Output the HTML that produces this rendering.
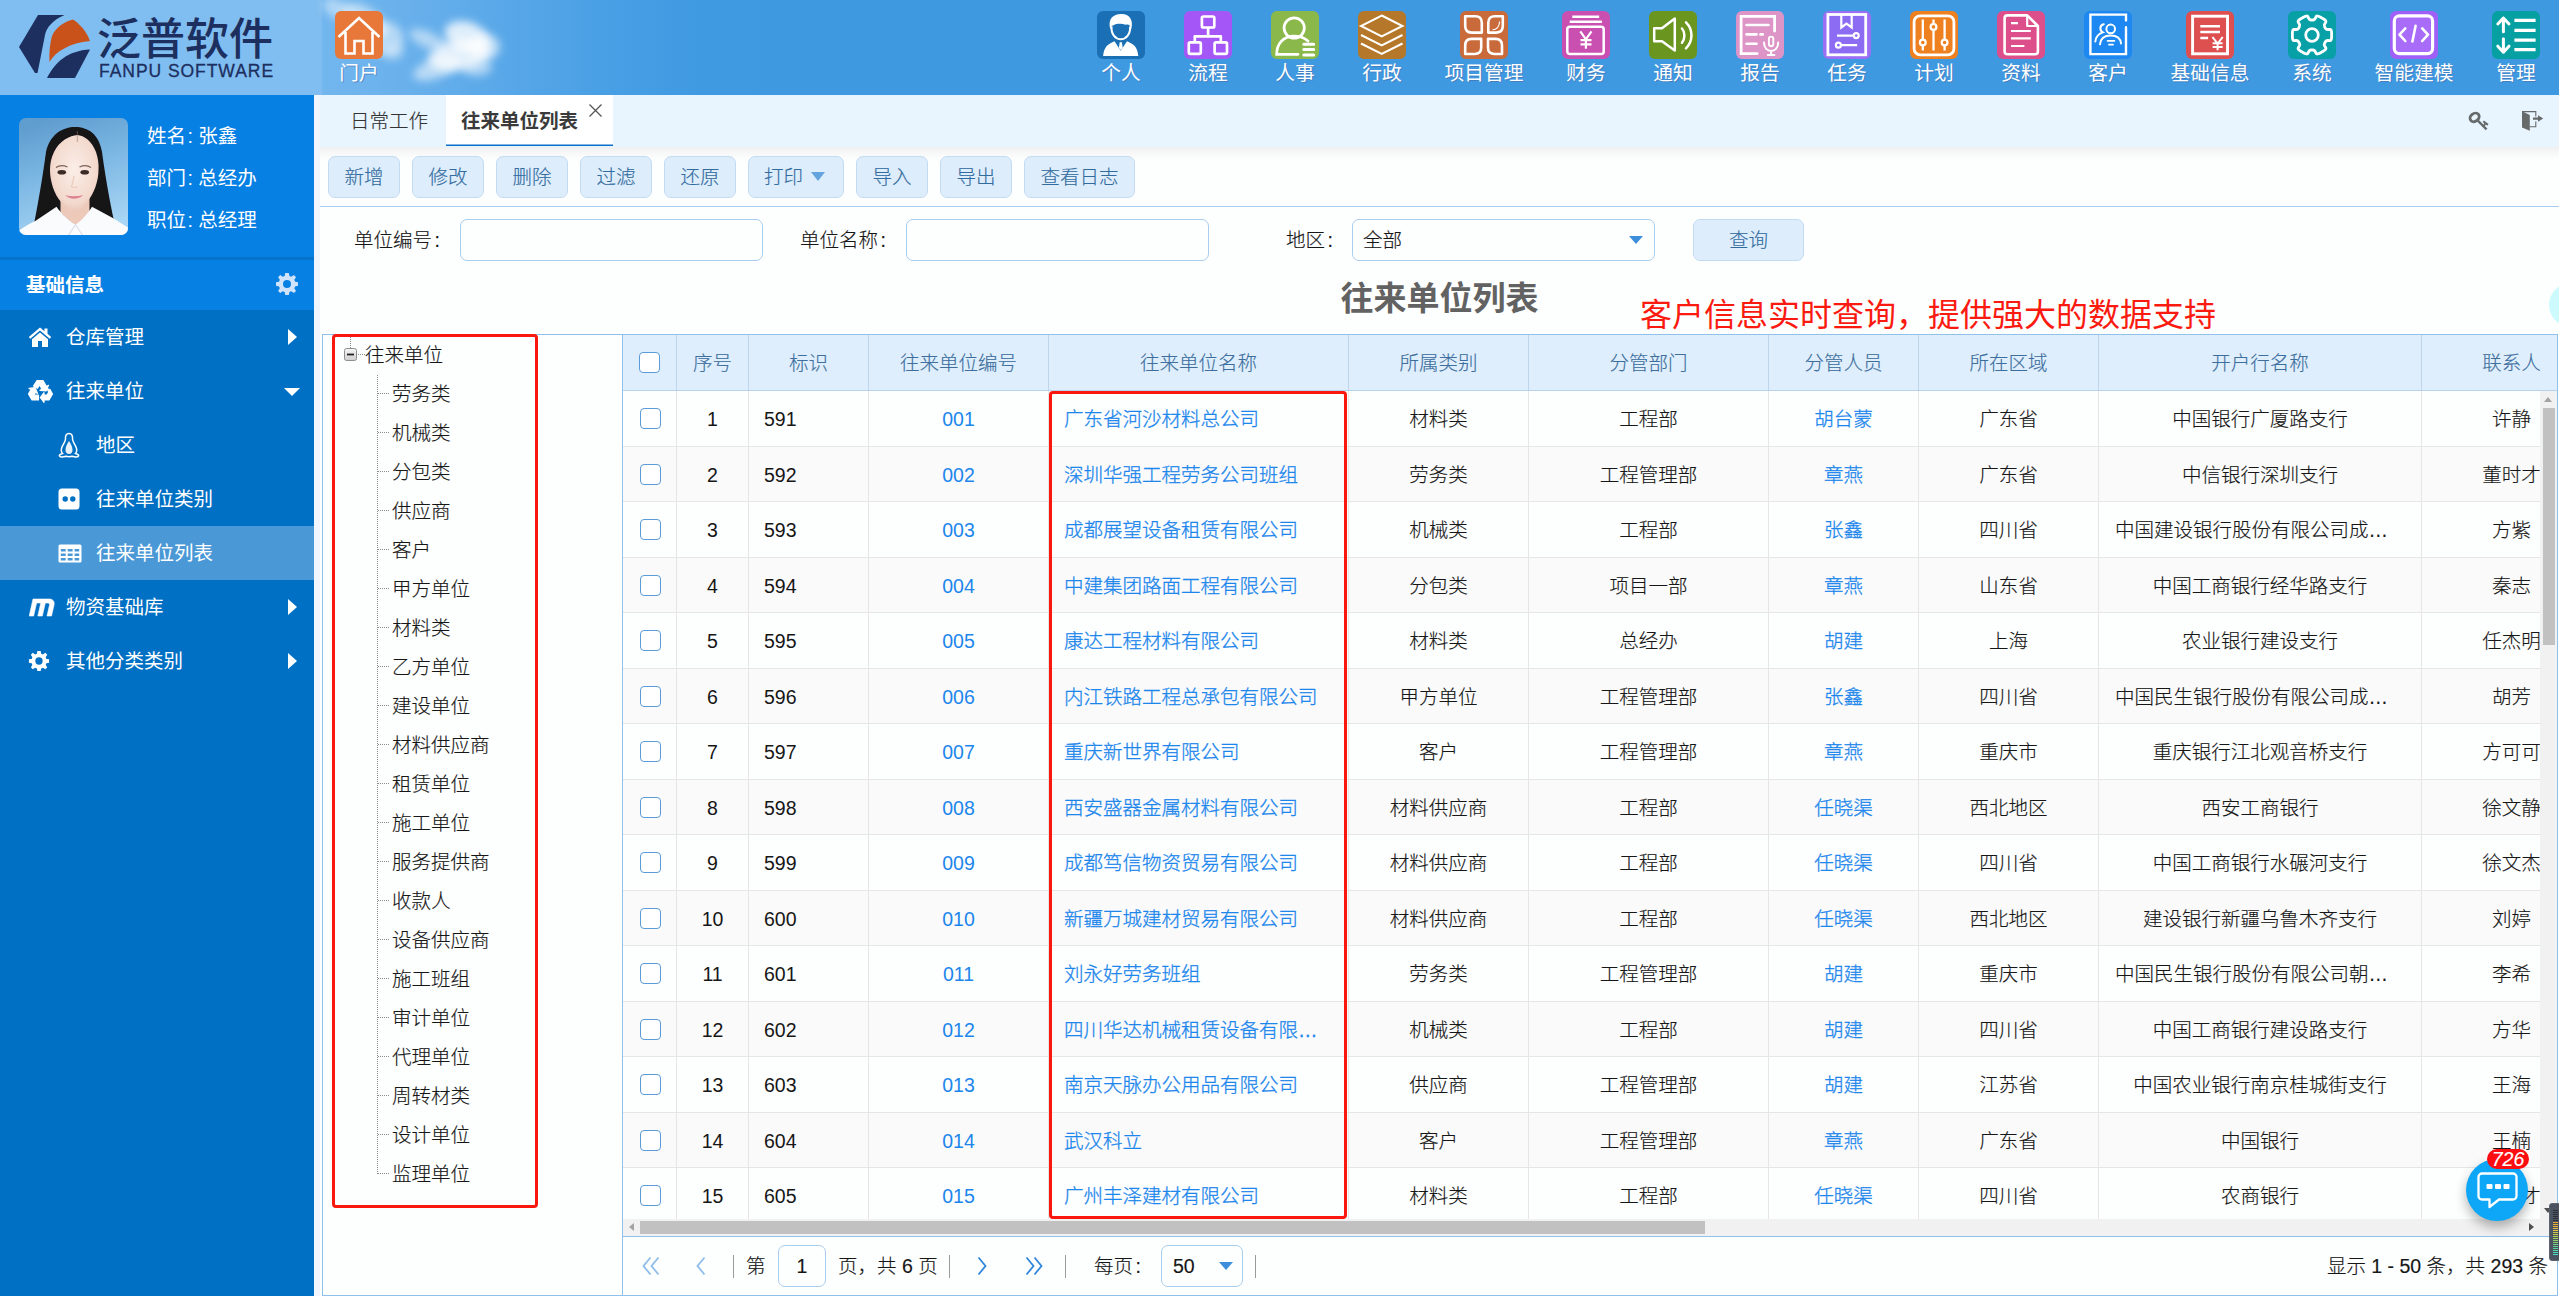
<!DOCTYPE html>
<html lang="zh-CN">
<head>
<meta charset="utf-8">
<title>往来单位列表 - 泛普软件</title>
<style>
*{box-sizing:border-box;margin:0;padding:0}
html,body{width:2559px;height:1296px;overflow:hidden;background:#fdfefe}
body{font-family:"Liberation Sans","Noto Sans CJK SC",sans-serif;font-size:19.5px;font-weight:300;-webkit-text-stroke:0.16px currentColor;color:#1a1a1a;position:relative}
#hdr,#side{font-weight:400;-webkit-text-stroke:0}
#title,#tabs .act,#sect b{-webkit-text-stroke:0}
.abs{position:absolute}
/* header */
#hdr{position:absolute;left:0;top:0;width:2559px;height:95px;overflow:hidden;
 background:linear-gradient(90deg,#80bdf0 0,#80bdf0 321px,#72b6ee 323px,#6ab1ec 400px,#58a7e8 510px,#489fe4 610px,#409ae2 700px,#3f99e1 790px,#3f99e1 100%)}
.cloud{position:absolute;border-radius:50%;filter:blur(4px);background:#fff}
#logo-cn{position:absolute;left:97px;top:7.5px;font-size:44px;line-height:64px;font-weight:500;color:#1c2f5f;letter-spacing:0px;white-space:nowrap}
#logo-en{position:absolute;left:99px;top:59px;font-size:17.5px;line-height:24px;color:#1c2f5f;letter-spacing:0.95px;white-space:nowrap;-webkit-text-stroke:0.3px #1c2f5f}
.nav{position:absolute;top:11px;width:130px;margin-left:-65px;text-align:center;color:#fff;font-size:19.75px;line-height:24px;white-space:nowrap}
.nav svg{display:block;margin:0 auto;width:48px;height:48px;border-radius:6px}
.nav span{display:block;margin-top:1.5px;text-shadow:1px 1px 0 rgba(70,110,170,.6)}
/* sidebar */
#side{position:absolute;left:0;top:95px;width:314px;height:1201px;background:#0070c4;color:#fff}
#user{position:absolute;left:0;top:0;width:314px;height:162px;background:#0780e4}
#user .ln{position:absolute;left:147px;font-size:19.5px;line-height:28px;white-space:nowrap}
#sect{position:absolute;left:0;top:162px;width:314px;height:53px;background:#0780e4;border-top:3px solid #0572cb}
#sect b{position:absolute;left:26px;top:11px;font-size:19.5px;line-height:28px;font-weight:700}
.mi{position:absolute;left:0;width:314px;height:54px;line-height:54px;font-size:19.5px;white-space:nowrap}
.mi .t{position:absolute;left:66px;top:0}
.mi.sub .t{left:96px}
.mi svg{position:absolute}
.mi.sel{background:#4a98d6}
.arr-r{position:absolute;left:288px;top:19px;width:0;height:0;border-left:9px solid #fff;border-top:8px solid transparent;border-bottom:8px solid transparent}
.arr-d{position:absolute;left:284px;top:24px;width:0;height:0;border-top:8px solid #fff;border-left:8px solid transparent;border-right:8px solid transparent}
/* main */
#strip{position:absolute;left:314px;top:95px;width:6px;height:1201px;background:#f1f5fd}
#tabs{position:absolute;left:320px;top:95px;width:2239px;height:52px;background:#e8f4fe}
#tabs .tab{position:absolute;top:0;height:51px;line-height:52px;font-size:19.5px;color:#333;white-space:nowrap}
#tabs .act{left:126px;width:167px;background:linear-gradient(180deg,#fff 0,#fff 49px,#0a6fc8 50px,#0a6fc8 51px);font-weight:700;color:#3a3a3a;padding-left:15px}
#shadow{position:absolute;left:320px;top:147px;width:2239px;height:13px;background:linear-gradient(180deg,#efefef 0,#f7f7f7 40%,#fdfefe 100%)}
.btn{position:absolute;top:156px;height:42px;line-height:40px;border:1px solid #c4dcf3;border-radius:7px;background:#deedfb;color:#326c9f;font-size:19.5px;text-align:center;white-space:nowrap}
.lbl{position:absolute;top:226px;line-height:28px;font-size:19.5px;color:#161616;white-space:nowrap}
.cl{margin-left:2.5px}
.inp{position:absolute;top:219px;height:42px;border:1px solid #a9cdee;border-radius:7px;background:#fdfefe}
#title{position:absolute;left:320px;top:275px;width:2239px;text-align:center;font-size:33px;line-height:48px;font-weight:700;color:#626262}
#note{position:absolute;left:1640px;top:291.5px;font-size:32px;line-height:46px;font-weight:400;-webkit-text-stroke:0;color:#fb1a10;white-space:nowrap}
/* panel */
#panel{position:absolute;left:322px;top:334px;width:2236px;height:962px;border:1px solid #8fc1ea;background:#fdfefe}
#tree{position:absolute;left:323px;top:335px;width:299px;height:960px}
.tn{position:absolute;left:392px;line-height:28px;font-size:19.5px;color:#161616;white-space:nowrap}
.redbox{position:absolute;border:3px solid #fa170e;border-radius:4px}
#grid{position:absolute;left:622px;top:335px;width:1935px;height:960px;border-left:1px solid #8fc1ea;overflow:hidden}
#gh{position:absolute;left:0;top:0;width:1934px;height:56px;background:#dfeefc;border-bottom:1px solid #b7d3ec}
.hc{position:absolute;top:0;height:55px;line-height:57px;text-align:center;color:#3d6e9e;font-size:19.5px;border-right:1px solid #bdd6ed;white-space:nowrap;overflow:hidden}
#gb{position:absolute;left:0;top:56px;width:1917px;height:828px;overflow:hidden}
.row{position:absolute;left:0;width:1980px;height:55.5px;border-bottom:1px solid #e6e6e6;background:#fdfefe}
.row.alt{background:#fafafa}
.c.t{text-align:left;padding-left:16px}
.c{position:absolute;top:0;height:55.5px;line-height:56.5px;text-align:center;border-right:1px solid #e6e6e6;white-space:nowrap;overflow:hidden;;font-size:19.5px;color:#161616}
.c.l{text-align:left;padding-left:15px}
.c.n{-webkit-text-stroke:0}
.c.a{color:#1c86ec;-webkit-text-stroke:0.3px #1c86ec}
.c.a.n{-webkit-text-stroke:0}
.cb{position:absolute;width:21px;height:21px;border:1.5px solid #5a9bd8;border-radius:4px;background:#fff}
#pager{position:absolute;left:0;top:901px;width:1934px;height:59px;border-top:1px solid #8fc1ea;;font-size:19.5px;color:#161616}
#pager .t{position:absolute;top:15px;line-height:28px;white-space:nowrap}
.sep{position:absolute;top:18px;width:1px;height:23px;background:#9a9a9a}
</style>
</head>
<body>
<div id="hdr">
 <div class="cloud" style="left:322px;top:0px;width:30px;height:18px;opacity:.45;transform:rotate(30deg)"></div>
 <div class="cloud" style="left:340px;top:8px;width:50px;height:26px;opacity:.55;transform:rotate(35deg)"></div>
 <div class="cloud" style="left:368px;top:22px;width:36px;height:34px;opacity:.5;transform:rotate(40deg)"></div>
 <div class="cloud" style="left:384px;top:44px;width:20px;height:16px;opacity:.3"></div>
 <div class="cloud" style="left:408px;top:32px;width:40px;height:16px;opacity:.5;transform:rotate(25deg)"></div>
 <div class="cloud" style="left:444px;top:22px;width:46px;height:30px;opacity:.8;transform:rotate(20deg)"></div>
 <div class="cloud" style="left:428px;top:40px;width:62px;height:30px;opacity:.8;transform:rotate(-10deg)"></div>
 <div class="cloud" style="left:470px;top:34px;width:30px;height:26px;opacity:.6"></div>
 <div class="cloud" style="left:412px;top:58px;width:50px;height:20px;opacity:.55;transform:rotate(-20deg)"></div>
 <div class="cloud" style="left:462px;top:58px;width:30px;height:18px;opacity:.5"></div>
 <svg class="abs" style="left:0;top:0" width="100" height="95" viewBox="0 0 100 95">
  <path d="M38,15 L64.5,15 C53,20 46.5,27 45,35 L37.5,73 L35,73 L19,47 Z" fill="#1c2f5f"/>
  <path d="M73,19.5 C80,24 87,32 90,41 C70,43 56,51 49.5,62 C49,52 50,43 52,36 C56,27 64,22 73,19.5 Z" fill="#c9521b"/>
  <path d="M90,49.5 L75,78 L47,78 C55,62 68,50.5 90,49.5 Z" fill="#1c2f5f"/>
 </svg>
 <div id="logo-cn">泛普软件</div>
 <div id="logo-en">FANPU SOFTWARE</div>

 <div class="nav" style="left:359px">
  <svg viewBox="0 0 48 48" style="background:#e8783a"><path d="M3.5,26 L24,7 L44.5,26 M10.5,21 V42.5 H19.5 V30 H28.5 V42.5 H37.5 V21" fill="none" stroke="#fff" stroke-width="2.6" stroke-linejoin="miter"/></svg><span>门户</span></div>

 <div class="nav" style="left:1121px">
  <svg viewBox="0 0 48 48" style="background:#1b6fb5"><path d="M13.3,18.5 C10.5,8 16,3 24,3 C31.5,2.5 37,8 34.2,18.5 C33.8,14 31.5,13 28.5,13.8 C25,12.3 19.5,12.6 16.5,14.2 C14.5,14.6 13.8,16 13.3,18.5 Z" fill="#fff"/><path d="M14.6,15.5 C13.8,23.5 18.8,28.3 23.8,28.3 C28.7,28.3 33.8,23.5 33,15.5" fill="none" stroke="#fff" stroke-width="2"/><path d="M6.1,45 C7,36.5 10,33.3 17.5,30.2 L23.7,39.8 L30,30.2 C37.5,33.3 40.5,36.5 41.3,45 Z" fill="#fff"/><path d="M22.7,31.3 H24.9 L25.7,36.8 L23.8,39.2 L21.9,36.8 Z" fill="#fff"/></svg><span>个人</span></div>

 <div class="nav" style="left:1208px">
  <svg viewBox="0 0 48 48" style="background:#a556f6"><g fill="none" stroke="#fff" stroke-width="2.7" stroke-linejoin="round"><rect x="17.9" y="5.5" width="12.4" height="11" rx="1.5"/><rect x="4.8" y="31.3" width="12" height="11.5" rx="1.5"/><rect x="30.6" y="31.3" width="12.4" height="11.5" rx="1.5"/><path d="M24.1,16.5 V25.3 M10.8,31.3 V25.3 H36.8 V31.3"/></g></svg><span>流程</span></div>

 <div class="nav" style="left:1295px">
  <svg viewBox="0 0 48 48" style="background:#8bb84a"><g fill="none" stroke="#fff" stroke-width="2.8" stroke-linecap="round"><circle cx="23.2" cy="17" r="10.1"/><path d="M37,30 C33,26.5 28.5,25.2 23,25.2 C12,25.2 5.7,33 5.7,43.3 H27"/><path d="M32.8,33.3 H42.7 M32.8,38.6 H42.7 M32.8,43.9 H42.7" stroke-width="3"/></g></svg><span>人事</span></div>

 <div class="nav" style="left:1382px">
  <svg viewBox="0 0 48 48" style="background:#b5782a"><g fill="none" stroke="#fff" stroke-width="2" stroke-linejoin="miter"><path d="M23.7,4.5 L44.5,15 L23.7,25.5 L3,15 Z"/><path d="M3,24 L23.7,34.5 L44.5,24"/><path d="M3,32.5 L23.7,43 L44.5,32.5"/></g></svg><span>行政</span></div>

 <div class="nav" style="left:1484px">
  <svg viewBox="0 0 48 48" style="background:#c96a3a"><g fill="none" stroke="#fff" stroke-width="2.6" stroke-linejoin="round"><path d="M5.2,5.2 L15.3,5.2 Q21.8,5.2 21.8,11.7 L21.8,21.6 L11.7,21.6 Q5.2,21.6 5.2,15.1 Z"/><path d="M34.8,5.2 L42.8,5.2 L42.8,15.1 Q42.8,21.6 36.3,21.6 L28.3,21.6 L28.3,11.7 Q28.3,5.2 34.8,5.2 Z"/><path d="M11.7,27.9 L21.2,27.9 L21.2,36.5 Q21.2,43 14.7,43 L5.2,43 L5.2,34.4 Q5.2,27.9 11.7,27.9 Z"/><path d="M28,27.9 L35.5,27.9 Q42,27.9 42,34.4 L42,43 L34.5,43 Q28,43 28,36.5 Z"/></g><path d="M32.5,18.8 C37,18.6 39.3,16 39.6,10.5" fill="none" stroke="#fff" stroke-width="1.1"/></svg><span>项目管理</span></div>

 <div class="nav" style="left:1586px">
  <svg viewBox="0 0 48 48" style="background:#c94fb0"><g fill="none" stroke="#fff" stroke-width="2.5"><path d="M10.3,5.7 H37.2 M7.7,10.8 H39.9"/><rect x="5.3" y="15.8" width="36.4" height="27.2" rx="2.5"/><path d="M18.3,20.3 L23.9,28.3 L29.5,20.3 M23.9,28.3 V37.7 M18.5,29.2 H29.5 M18.5,33.4 H29.5" stroke-width="2.2"/></g></svg><span>财务</span></div>

 <div class="nav" style="left:1673px">
  <svg viewBox="0 0 48 48" style="background:#6a9620"><g fill="none" stroke="#fff" stroke-width="2.5" stroke-linejoin="round" stroke-linecap="round"><path d="M5.2,17.2 H13 L25.8,7.5 V39.5 L13,30.2 H5.2 Z"/><path d="M33,17.5 C36.2,21 36.2,28 33,31.8"/><path d="M37,11.3 C44.3,18.5 44.3,30 37,37.3"/></g></svg><span>通知</span></div>

 <div class="nav" style="left:1760px">
  <svg viewBox="0 0 48 48" style="background:#dd94c6"><g fill="none" stroke="#fff" stroke-width="2.8" stroke-linecap="round"><path d="M21.2,42.6 H5.1 V5.4 H38.6 V20"/><path d="M10.5,14 H32.5 M10.5,23.4 H20.5 M10.5,32.8 H20.5" stroke-width="2.6"/><path d="M24.5,23.4 H26.8" stroke-width="2.6"/><rect x="32.9" y="25.6" width="4.4" height="9.6" rx="2.2" stroke-width="1.9"/><path d="M28,31.5 C28,42.8 42.2,42.8 42.2,31.5 M35.1,40.2 V43.8 M31.8,44 H38.4" stroke-width="2"/></g></svg><span>报告</span></div>

 <div class="nav" style="left:1847px">
  <svg viewBox="0 0 48 48" style="background:#9a6ff4"><rect x="4.9" y="3.5" width="37.8" height="40.3" fill="#8b6cf2" stroke="#fff" stroke-width="2.8"/><g fill="none" stroke="#fff" stroke-width="2.2"><path d="M18.3,4 V16.5 L23.5,12.6 L28.7,16.5 V4"/><circle cx="33.2" cy="24.6" r="2.5"/><path d="M14,24.6 H30.5"/><circle cx="15.4" cy="34.2" r="2.5"/><path d="M18,34.2 H34.2"/></g></svg><span>任务</span></div>

 <div class="nav" style="left:1934px">
  <svg viewBox="0 0 48 48" style="background:#ef8020"><g fill="none" stroke="#fff" stroke-width="2.8"><rect x="4.1" y="4.8" width="39.8" height="39" rx="6"/><path d="M12.8,8.5 V28.5 M12.8,34.6 V39.6 M23.5,8.5 V12.8 M23.5,19 V39.6 M34.6,8.5 V28.5 M34.6,34.6 V39.6" stroke-width="2.3"/><circle cx="12.8" cy="31.5" r="2.9" stroke-width="2.2"/><circle cx="23.5" cy="15.9" r="2.9" stroke-width="2.2"/><circle cx="34.6" cy="31.5" r="2.9" stroke-width="2.2"/></g></svg><span>计划</span></div>

 <div class="nav" style="left:2021px">
  <svg viewBox="0 0 48 48" style="background:#dc4f8a"><g fill="none" stroke="#fff" stroke-width="2.6" stroke-linejoin="round"><path d="M10.5,4.4 H30.2 L40.9,15 V40.5 Q40.9,43.3 38,43.3 H10.5 Q7.6,43.3 7.6,40.5 V7.2 Q7.6,4.4 10.5,4.4 Z"/><path d="M30.2,4.8 V15 H40.5" stroke-width="2.2"/><path d="M14,12.2 H21 M14,20 H33.8 M14,27.4 H33.8 M14,35 H27.4" stroke-width="2.2"/></g></svg><span>资料</span></div>

 <div class="nav" style="left:2108px">
  <svg viewBox="0 0 48 48" style="background:#1e88f2"><g fill="none" stroke="#fff" stroke-width="2.4" stroke-linecap="round"><path d="M42,9.4 V3.6 H6.4 V43.1 H42 V16.2"/><circle cx="26.7" cy="17.9" r="4.3" stroke-width="2"/><path d="M16,33.3 C16.5,27 21,24.4 26.7,24.4 C32.4,24.4 36.5,27 37,32.5" stroke-width="2"/><path d="M19.8,13.2 C15.5,14 15.3,19.5 18.8,21.4 C14,23 11.8,26.5 11.3,30.5" stroke-width="2"/><path d="M23.5,29.8 H30.5 M24.9,33.6 H29.1" stroke-width="1.7"/></g></svg><span>客户</span></div>

 <div class="nav" style="left:2210px">
  <svg viewBox="0 0 48 48" style="background:#de5050"><g fill="none" stroke="#fff" stroke-width="2.9"><rect x="6.6" y="5.2" width="34.9" height="37.6"/><path d="M14.3,15.3 H34 M14.3,21 H34 M14.3,27 H22.1" stroke-width="2.5"/><path d="M26.5,26 L31.6,32.6 L36.7,26 M31.6,32.6 V39.2 M26.6,32.2 H36.6 M26.6,35.9 H36.6" stroke-width="2"/></g></svg><span>基础信息</span></div>

 <div class="nav" style="left:2312px">
  <svg viewBox="0 0 48 48" style="background:#06a0a6"><g fill="none" stroke="#fff" stroke-width="2.8" stroke-linejoin="round"><path d="M41.9,18.4 Q43.6,18.4 43.6,22 L43.6,26 Q43.6,29.6 41.9,29.6 L39.9,29.5 Q38.2,29.4 37.4,30.8 L36.6,32.2 Q35.8,33.6 36.7,35 L37.8,36.7 Q38.7,38.2 35.6,40 L32.1,42 Q28.9,43.8 28.1,42.3 L27.2,40.5 Q26.4,39 24.9,39 L23.1,39 Q21.6,39 20.8,40.5 L19.9,42.3 Q19.1,43.8 15.9,42 L12.4,40 Q9.3,38.2 10.2,36.7 L11.3,35 Q12.2,33.6 11.4,32.2 L10.6,30.8 Q9.8,29.4 8.1,29.5 L6.1,29.6 Q4.4,29.6 4.4,26 L4.4,22 Q4.4,18.4 6.1,18.4 L8.1,18.5 Q9.8,18.6 10.6,17.2 L11.4,15.8 Q12.2,14.4 11.3,13 L10.2,11.3 Q9.3,9.8 12.4,8 L15.9,6 Q19.1,4.2 19.9,5.7 L20.8,7.5 Q21.6,9 23.1,9 L24.9,9 Q26.4,9 27.2,7.5 L28.1,5.7 Q28.9,4.2 32.1,6 L35.6,8 Q38.7,9.8 37.8,11.3 L36.7,13 Q35.8,14.4 36.6,15.8 L37.4,17.2 Q38.2,18.6 39.9,18.5 Z"/><circle cx="24" cy="24" r="6.3"/></g></svg><span>系统</span></div>

 <div class="nav" style="left:2414px">
  <svg viewBox="0 0 48 48" style="background:#a05ff6"><rect x="4.3" y="4.9" width="38.3" height="37.7" rx="5" fill="#a86cf9" stroke="#fff" stroke-width="3.2"/><g fill="none" stroke="#fff" stroke-width="2.6" stroke-linecap="round" stroke-linejoin="round"><path d="M15.3,17.4 L9.5,23.6 L15.3,30 M32.2,17.4 L38,23.6 L32.2,30 M25.6,14.8 L22.4,30.5"/></g></svg><span>智能建模</span></div>

 <div class="nav" style="left:2516px">
  <svg viewBox="0 0 48 48" style="background:#06a0a2"><g fill="none" stroke="#fff" stroke-width="3.3"><path d="M22.4,9.3 H43.6 M22.4,19.3 H43.6 M22.4,29.1 H43.6 M22.4,38.7 H43.6"/><path d="M11.4,7 V20.7 M5.8,13 L11.4,7 L17,13" stroke-width="3" stroke-linecap="round" stroke-linejoin="round"/><path d="M11.4,27.8 V41.2 M5.8,35.2 L11.4,41.2 L17,35.2" stroke-width="3" stroke-linecap="round" stroke-linejoin="round"/></g></svg><span>管理</span></div>
</div>
<div id="side">
 <div id="user">
  <svg class="abs" style="left:19px;top:23px;border-radius:7px" width="109" height="117" viewBox="0 0 109 117">
   <defs>
    <linearGradient id="avbg" x1="0.3" y1="0" x2="0.6" y2="1"><stop offset="0" stop-color="#5f9dcf"/><stop offset=".45" stop-color="#7db8e4"/><stop offset="1" stop-color="#a9d6f4"/></linearGradient>
    <radialGradient id="avsk" cx="0.5" cy="0.45" r="0.65"><stop offset="0" stop-color="#fbeee8"/><stop offset=".7" stop-color="#f3d9cd"/><stop offset="1" stop-color="#e2bba9"/></radialGradient>
    <filter id="avbl" x="-5%" y="-5%" width="110%" height="110%"><feGaussianBlur stdDeviation="0.7"/></filter>
   </defs>
   <rect width="109" height="117" fill="url(#avbg)"/>
   <g filter="url(#avbl)">
    <path d="M15,106 C19,86 23.5,60 27,34 C31,16 44,9 56,9 C69,9 80,16 83,34 C86.5,60 91,84 95,103 L73,98 L37.5,98 Z" fill="#141318"/>
    <path d="M41.5,78 L41.5,95 L56.5,108 L70.5,95 L70.5,78 Z" fill="#ecc9b9"/>
    <path d="M-2,119 L-2,114 C6,108 12,105 16.3,103 L37.5,88.7 C41,94 50,103.5 56.5,106.5 C62,103.5 70,94 73,88.7 L93.8,100 C99,103 105,107 111,111 L111,119 Z" fill="#f9fbfd"/>
    <path d="M56.5,106.5 L49,118 M56.5,106.5 L64,118" stroke="#d9dee8" stroke-width="1.2" fill="none"/>
    <path d="M58.3,17 C65,17.5 73,23 77,34 C79,40 80,46 79.5,52 C79.5,63 75,76 68,84 C63,90 59,92.6 55,92.6 C51,92.6 47,90 42,84 C35,76 31,63 31,52 C31,46 32,40 35,34 C40,23 51,17.5 58.3,17 Z" fill="url(#avsk)"/>
    <path d="M58.3,13 L58.3,24" stroke="#8a7a74" stroke-width="0.8" opacity=".7"/>
    <ellipse cx="42.8" cy="54.3" rx="4.3" ry="2.3" fill="#3a2b28"/><ellipse cx="65.7" cy="54.3" rx="4.3" ry="2.3" fill="#3a2b28"/>
    <path d="M37,49.5 C40,47.5 45,47.5 48.5,49 M60.5,49 C64,47.5 69,47.5 72,49.5" stroke="#7d6258" stroke-width="1.3" fill="none"/>
    <path d="M55,58 C54,63 53.5,66 52.5,68.5 C54,70 57,70 58.5,68.5" stroke="#ebcdbf" stroke-width="1.3" fill="none"/>
    <path d="M46.4,77 C50,78.5 52.5,77.8 54.8,78.3 C57,77.8 60,78.5 64.2,77 C60,82 50,82 46.4,77 Z" fill="#df8494"/>
   </g>
  </svg>
  <div class="ln" style="top:27px">姓名<span class="cl" style="margin-left:1.5px">:</span> 张鑫</div>
  <div class="ln" style="top:69px">部门<span class="cl" style="margin-left:1.5px">:</span> 总经办</div>
  <div class="ln" style="top:111px">职位<span class="cl" style="margin-left:1.5px">:</span> 总经理</div>
 </div>
 <div id="sect"><b>基础信息</b>
  <svg class="abs" style="left:275px;top:12px" width="24" height="24" viewBox="0 0 24 24"><path fill="#cfe3fb" fill-rule="evenodd" d="M10.2,1 H13.8 L14.4,4 L16.3,4.8 L18.9,3.1 L21,5.2 L19.3,7.8 L20.1,9.7 L23,10.2 V13.8 L20.1,14.4 L19.3,16.3 L21,18.9 L18.9,21 L16.3,19.3 L14.4,20.1 L13.8,23 H10.2 L9.7,20.1 L7.8,19.3 L5.2,21 L3.1,18.9 L4.8,16.3 L4,14.4 L1,13.8 V10.2 L4,9.7 L4.8,7.8 L3.1,5.2 L5.2,3.1 L7.8,4.8 L9.7,4 Z M12,8 A4,4 0 1 0 12,16 A4,4 0 1 0 12,8 Z"/></svg>
 </div>

 <div class="mi" style="top:215px">
  <svg style="left:28px;top:16px" width="24" height="22" viewBox="0 0 24 22"><path fill="#fff" d="M12,1.5 L0.8,11 L2.3,12.7 L12,4.6 L21.7,12.7 L23.2,11 L19.5,7.8 V2.5 H16.5 V5.3 Z M12,6.5 L4,13.2 V21 H10 V15 H14 V21 H20 V13.2 Z"/></svg>
  <span class="t">仓库管理</span><i class="arr-r"></i></div>
 <div class="mi" style="top:269px">
  <svg style="left:28px;top:15px" width="25" height="24" viewBox="0 0 25 24"><g fill="#fff" stroke="#fff" stroke-width="1.2" stroke-linejoin="round"><path d="M9,1.5 H15 L18.5,7.5 L20.5,6.3 L18,12 L12,11.3 L14,10.1 L11.5,5.8 L9.5,9.3 L5.5,7 Z"/><path d="M22,10.5 L24.5,15 L21,21 H16 V23.3 L12.3,18.5 L16,13.7 V16 H19 L20.8,13 L18.7,9.5 Z"/><path d="M10.5,21 H4 L0.5,15 L3,10.6 L1,9.4 L7.2,8.7 L9.5,14.5 L7.5,13.3 L5.8,16.2 H10.5 Z"/></g></svg>
  <span class="t">往来单位</span><i class="arr-d"></i></div>
 <div class="mi sub" style="top:323px">
  <svg style="left:57px;top:14px" width="24" height="26" viewBox="0 0 24 26"><path d="M12,1.5 C9,1.5 8.3,4 8.5,7 C8.6,9.5 6,12 4.8,15.5 C3.8,18.5 4.5,20.5 5.5,21.5 C3.5,22 2,23 2.5,24 C3.2,25 7,24.8 9,24.3 C11,24.8 13,24.8 15,24.3 C17,24.8 20.8,25 21.5,24 C22,23 20.5,22 18.5,21.5 C19.5,20.5 20.2,18.5 19.2,15.5 C18,12 15.4,9.5 15.5,7 C15.7,4 15,1.5 12,1.5 Z" fill="none" stroke="#fff" stroke-width="1.5"/><path d="M12,9 C10,12 8.5,15 8.5,18 C8.5,20.5 10,22 12,22 C14,22 15.5,20.5 15.5,18 C15.5,15 14,12 12,9 Z" fill="#fff" opacity=".9"/></svg>
  <span class="t">地区</span></div>
 <div class="mi sub" style="top:377px">
  <svg style="left:58px;top:16px" width="22" height="22" viewBox="0 0 22 22"><path fill="#fff" fill-rule="evenodd" d="M4,0.5 H18 A3.5,3.5 0 0 1 21.5,4 V18 A3.5,3.5 0 0 1 18,21.5 H4 A3.5,3.5 0 0 1 0.5,18 V4 A3.5,3.5 0 0 1 4,0.5 Z M7.2,8.3 A2.7,2.7 0 1 0 7.2,13.7 A2.7,2.7 0 1 0 7.2,8.3 Z M14.8,8.3 A2.7,2.7 0 1 0 14.8,13.7 A2.7,2.7 0 1 0 14.8,8.3 Z"/></svg>
  <span class="t">往来单位类别</span></div>
 <div class="mi sub sel" style="top:431px">
  <svg style="left:58px;top:18px" width="24" height="19" viewBox="0 0 24 19"><path fill="#fff" fill-rule="evenodd" d="M2,0.5 H22 A1.5,1.5 0 0 1 23.5,2 V17 A1.5,1.5 0 0 1 22,18.5 H2 A1.5,1.5 0 0 1 0.5,17 V2 A1.5,1.5 0 0 1 2,0.5 Z M2.8,5 V7.5 H7.7 V5 Z M9.7,5 V7.5 H14.6 V5 Z M16.6,5 V7.5 H21.2 V5 Z M2.8,9.5 V12 H7.7 V9.5 Z M9.7,9.5 V12 H14.6 V9.5 Z M16.6,9.5 V12 H21.2 V9.5 Z M2.8,14 V16.5 H7.7 V14 Z M9.7,14 V16.5 H14.6 V14 Z M16.6,14 V16.5 H21.2 V14 Z"/></svg>
  <span class="t">往来单位列表</span></div>
 <div class="mi" style="top:485px">
  <svg style="left:28.5px;top:18px" width="26" height="19" viewBox="0 0 26 19"><path fill="#fff" stroke="#fff" stroke-width="0.6" d="M4,1 H20 C24,1 25.8,3.5 25,7 L22.5,18 H18 L20.4,7.5 C20.8,6 20.2,5 18.8,5 H16.3 L13.3,18 H8.8 L11.8,5 H7.6 L4.6,18 H0.2 Z"/></svg>
  <span class="t">物资基础库</span><i class="arr-r"></i></div>
 <div class="mi" style="top:539px">
  <svg style="left:28px;top:16px" width="22" height="22" viewBox="0 0 24 24"><path fill="#fff" fill-rule="evenodd" d="M10.2,1 H13.8 L14.4,4 L16.3,4.8 L18.9,3.1 L21,5.2 L19.3,7.8 L20.1,9.7 L23,10.2 V13.8 L20.1,14.4 L19.3,16.3 L21,18.9 L18.9,21 L16.3,19.3 L14.4,20.1 L13.8,23 H10.2 L9.7,20.1 L7.8,19.3 L5.2,21 L3.1,18.9 L4.8,16.3 L4,14.4 L1,13.8 V10.2 L4,9.7 L4.8,7.8 L3.1,5.2 L5.2,3.1 L7.8,4.8 L9.7,4 Z M12,8 A4,4 0 1 0 12,16 A4,4 0 1 0 12,8 Z"/></svg>
  <span class="t">其他分类类别</span><i class="arr-r"></i></div>
</div>
<div id="strip"></div>
<div id="tabs">
 <div class="tab" style="left:30px">日常工作</div>
 <div class="tab act">往来单位列表</div>
 <svg class="abs" style="left:268px;top:8px" width="15" height="15" viewBox="0 0 15 15"><path d="M1.5,1.5 L13.5,13.5 M13.5,1.5 L1.5,13.5" stroke="#555" stroke-width="1.3" fill="none"/></svg>
 <svg class="abs" style="left:2146px;top:14px" width="26" height="24" viewBox="0 0 26 24"><g fill="none" stroke="#666a6a" stroke-width="2.3"><ellipse cx="8.6" cy="8.4" rx="4.9" ry="3.9" transform="rotate(-38 8.6 8.4)" stroke-width="2.9"/><path d="M11.8,11.6 L20.6,20.4"/><path d="M17.3,12.2 L21.9,15.9 M19.6,14 L17.6,17" stroke-width="2"/></g></svg>
 <svg class="abs" style="left:2200px;top:14px" width="26" height="24" viewBox="0 0 26 24"><path d="M2,2.3 L9.8,6 V21.8 L2,18.5 Z" fill="#666a6a"/><path d="M2,2.6 H15.8 V7.5 M15.8,12.5 V17.8 H9.8" fill="none" stroke="#666a6a" stroke-width="1.1"/><path d="M13,8.4 H18 V6.2 L23.2,9.5 L18,12.8 V10.7 H13 Z" fill="#666a6a"/></svg>
</div>
<div id="shadow"></div>
<div class="btn" style="left:328px;width:72px">新增</div>
<div class="btn" style="left:412px;width:72px">修改</div>
<div class="btn" style="left:496px;width:72px">删除</div>
<div class="btn" style="left:580px;width:72px">过滤</div>
<div class="btn" style="left:664px;width:72px">还原</div>
<div class="btn" style="left:748px;width:96px;text-align:left;padding-left:15px">打印<i class="abs" style="left:62px;top:15px;border-top:9px solid #64a4de;border-left:7px solid transparent;border-right:7px solid transparent"></i></div>
<div class="btn" style="left:856px;width:72px">导入</div>
<div class="btn" style="left:940px;width:72px">导出</div>
<div class="btn" style="left:1024px;width:111px">查看日志</div>
<div class="abs" style="left:320px;top:206px;width:2239px;height:1px;background:#a9cdee"></div>

<div class="lbl" style="left:354px">单位编号<span class="cl">:</span></div>
<div class="inp" style="left:460px;width:303px"></div>
<div class="lbl" style="left:800px">单位名称<span class="cl">:</span></div>
<div class="inp" style="left:906px;width:303px"></div>
<div class="lbl" style="left:1286px">地区<span class="cl">:</span></div>
<div class="inp" style="left:1352px;width:303px"><span class="abs" style="left:10px;top:6px;line-height:28px;color:#161616">全部</span><i class="abs" style="left:276px;top:16px;border-top:8.5px solid #3d8edb;border-left:7px solid transparent;border-right:7px solid transparent"></i></div>
<div class="btn" style="left:1693px;top:219px;width:111px">查询</div>

<div id="title">往来单位列表</div>
<div id="note">客户信息实时查询，提供强大的数据支持</div>
<div class="abs" style="left:2549px;top:283px;width:44px;height:44px;border-radius:50%;background:#cdfbfd"></div>
<div id="panel"></div>
<div id="treewrap">
<svg class="abs" style="left:340px;top:336px" width="60" height="850" viewBox="0 0 60 850"><defs><linearGradient id="exg" x1="0" y1="0" x2="0" y2="1"><stop offset="0" stop-color="#f6f6f6"/><stop offset="1" stop-color="#cfcfcf"/></linearGradient></defs><g stroke="#8c8c8c" stroke-width="1" stroke-dasharray="1 1" fill="none"><path d="M10.5,1 V12"/><path d="M18,18.5 H25"/><path d="M37.5,39 V838"/><path d="M38,57.5 H50"/><path d="M38,96.5 H50"/><path d="M38,135.5 H50"/><path d="M38,174.5 H50"/><path d="M38,213.5 H50"/><path d="M38,252.5 H50"/><path d="M38,291.5 H50"/><path d="M38,330.5 H50"/><path d="M38,369.5 H50"/><path d="M38,408.5 H50"/><path d="M38,447.5 H50"/><path d="M38,486.5 H50"/><path d="M38,525.5 H50"/><path d="M38,564.5 H50"/><path d="M38,603.5 H50"/><path d="M38,642.5 H50"/><path d="M38,681.5 H50"/><path d="M38,720.5 H50"/><path d="M38,759.5 H50"/><path d="M38,798.5 H50"/><path d="M38,837.5 H50"/></g><rect x="4.5" y="12.5" width="12" height="12" rx="2" fill="url(#exg)" stroke="#8e8e8e"/><path d="M7,18.5 H14" stroke="#222" stroke-width="1.8"/></svg>
<div class="tn" style="left:365px;top:341px">往来单位</div>
<div class="tn" style="top:380px">劳务类</div>
<div class="tn" style="top:419px">机械类</div>
<div class="tn" style="top:458px">分包类</div>
<div class="tn" style="top:497px">供应商</div>
<div class="tn" style="top:536px">客户</div>
<div class="tn" style="top:575px">甲方单位</div>
<div class="tn" style="top:614px">材料类</div>
<div class="tn" style="top:653px">乙方单位</div>
<div class="tn" style="top:692px">建设单位</div>
<div class="tn" style="top:731px">材料供应商</div>
<div class="tn" style="top:770px">租赁单位</div>
<div class="tn" style="top:809px">施工单位</div>
<div class="tn" style="top:848px">服务提供商</div>
<div class="tn" style="top:887px">收款人</div>
<div class="tn" style="top:926px">设备供应商</div>
<div class="tn" style="top:965px">施工班组</div>
<div class="tn" style="top:1004px">审计单位</div>
<div class="tn" style="top:1043px">代理单位</div>
<div class="tn" style="top:1082px">周转材类</div>
<div class="tn" style="top:1121px">设计单位</div>
<div class="tn" style="top:1160px">监理单位</div>
</div>
<div id="grid">
<div id="gh">
<div class="hc" style="left:0px;width:54px"><i class="cb" style="left:16px;top:17px"></i></div>
<div class="hc" style="left:54px;width:72px">序号</div>
<div class="hc" style="left:126px;width:120px">标识</div>
<div class="hc" style="left:246px;width:180px">往来单位编号</div>
<div class="hc" style="left:426px;width:300px">往来单位名称</div>
<div class="hc" style="left:726px;width:180px">所属类别</div>
<div class="hc" style="left:906px;width:240px">分管部门</div>
<div class="hc" style="left:1146px;width:150px">分管人员</div>
<div class="hc" style="left:1296px;width:180px">所在区域</div>
<div class="hc" style="left:1476px;width:323px">开户行名称</div>
<div class="hc" style="left:1799px;width:180px">联系人</div>
</div>
<div id="gb">
<div class="row" style="top:0px">
<div class="c" style="left:0;width:54px"><i class="cb" style="left:17px;top:17px"></i></div>
<div class="c n" style="left:54px;width:72px">1</div>
<div class="c l n" style="left:126px;width:120px">591</div>
<div class="c a n" style="left:246px;width:180px">001</div>
<div class="c l a" style="left:426px;width:300px">广东省河沙材料总公司</div>
<div class="c " style="left:726px;width:180px">材料类</div>
<div class="c " style="left:906px;width:240px">工程部</div>
<div class="c a" style="left:1146px;width:150px">胡台蒙</div>
<div class="c " style="left:1296px;width:180px">广东省</div>
<div class="c " style="left:1476px;width:323px">中国银行广厦路支行</div>
<div class="c " style="left:1799px;width:180px">许静</div>
</div>
<div class="row alt" style="top:55.5px">
<div class="c" style="left:0;width:54px"><i class="cb" style="left:17px;top:17px"></i></div>
<div class="c n" style="left:54px;width:72px">2</div>
<div class="c l n" style="left:126px;width:120px">592</div>
<div class="c a n" style="left:246px;width:180px">002</div>
<div class="c l a" style="left:426px;width:300px">深圳华强工程劳务公司班组</div>
<div class="c " style="left:726px;width:180px">劳务类</div>
<div class="c " style="left:906px;width:240px">工程管理部</div>
<div class="c a" style="left:1146px;width:150px">章燕</div>
<div class="c " style="left:1296px;width:180px">广东省</div>
<div class="c " style="left:1476px;width:323px">中信银行深圳支行</div>
<div class="c " style="left:1799px;width:180px">董时才</div>
</div>
<div class="row" style="top:111px">
<div class="c" style="left:0;width:54px"><i class="cb" style="left:17px;top:17px"></i></div>
<div class="c n" style="left:54px;width:72px">3</div>
<div class="c l n" style="left:126px;width:120px">593</div>
<div class="c a n" style="left:246px;width:180px">003</div>
<div class="c l a" style="left:426px;width:300px">成都展望设备租赁有限公司</div>
<div class="c " style="left:726px;width:180px">机械类</div>
<div class="c " style="left:906px;width:240px">工程部</div>
<div class="c a" style="left:1146px;width:150px">张鑫</div>
<div class="c " style="left:1296px;width:180px">四川省</div>
<div class="c t" style="left:1476px;width:323px">中国建设银行股份有限公司成…</div>
<div class="c " style="left:1799px;width:180px">方紫</div>
</div>
<div class="row alt" style="top:166.5px">
<div class="c" style="left:0;width:54px"><i class="cb" style="left:17px;top:17px"></i></div>
<div class="c n" style="left:54px;width:72px">4</div>
<div class="c l n" style="left:126px;width:120px">594</div>
<div class="c a n" style="left:246px;width:180px">004</div>
<div class="c l a" style="left:426px;width:300px">中建集团路面工程有限公司</div>
<div class="c " style="left:726px;width:180px">分包类</div>
<div class="c " style="left:906px;width:240px">项目一部</div>
<div class="c a" style="left:1146px;width:150px">章燕</div>
<div class="c " style="left:1296px;width:180px">山东省</div>
<div class="c " style="left:1476px;width:323px">中国工商银行经华路支行</div>
<div class="c " style="left:1799px;width:180px">秦志</div>
</div>
<div class="row" style="top:222px">
<div class="c" style="left:0;width:54px"><i class="cb" style="left:17px;top:17px"></i></div>
<div class="c n" style="left:54px;width:72px">5</div>
<div class="c l n" style="left:126px;width:120px">595</div>
<div class="c a n" style="left:246px;width:180px">005</div>
<div class="c l a" style="left:426px;width:300px">康达工程材料有限公司</div>
<div class="c " style="left:726px;width:180px">材料类</div>
<div class="c " style="left:906px;width:240px">总经办</div>
<div class="c a" style="left:1146px;width:150px">胡建</div>
<div class="c " style="left:1296px;width:180px">上海</div>
<div class="c " style="left:1476px;width:323px">农业银行建设支行</div>
<div class="c " style="left:1799px;width:180px">任杰明</div>
</div>
<div class="row alt" style="top:277.5px">
<div class="c" style="left:0;width:54px"><i class="cb" style="left:17px;top:17px"></i></div>
<div class="c n" style="left:54px;width:72px">6</div>
<div class="c l n" style="left:126px;width:120px">596</div>
<div class="c a n" style="left:246px;width:180px">006</div>
<div class="c l a" style="left:426px;width:300px">内江铁路工程总承包有限公司</div>
<div class="c " style="left:726px;width:180px">甲方单位</div>
<div class="c " style="left:906px;width:240px">工程管理部</div>
<div class="c a" style="left:1146px;width:150px">张鑫</div>
<div class="c " style="left:1296px;width:180px">四川省</div>
<div class="c t" style="left:1476px;width:323px">中国民生银行股份有限公司成…</div>
<div class="c " style="left:1799px;width:180px">胡芳</div>
</div>
<div class="row" style="top:333px">
<div class="c" style="left:0;width:54px"><i class="cb" style="left:17px;top:17px"></i></div>
<div class="c n" style="left:54px;width:72px">7</div>
<div class="c l n" style="left:126px;width:120px">597</div>
<div class="c a n" style="left:246px;width:180px">007</div>
<div class="c l a" style="left:426px;width:300px">重庆新世界有限公司</div>
<div class="c " style="left:726px;width:180px">客户</div>
<div class="c " style="left:906px;width:240px">工程管理部</div>
<div class="c a" style="left:1146px;width:150px">章燕</div>
<div class="c " style="left:1296px;width:180px">重庆市</div>
<div class="c " style="left:1476px;width:323px">重庆银行江北观音桥支行</div>
<div class="c " style="left:1799px;width:180px">方可可</div>
</div>
<div class="row alt" style="top:388.5px">
<div class="c" style="left:0;width:54px"><i class="cb" style="left:17px;top:17px"></i></div>
<div class="c n" style="left:54px;width:72px">8</div>
<div class="c l n" style="left:126px;width:120px">598</div>
<div class="c a n" style="left:246px;width:180px">008</div>
<div class="c l a" style="left:426px;width:300px">西安盛器金属材料有限公司</div>
<div class="c " style="left:726px;width:180px">材料供应商</div>
<div class="c " style="left:906px;width:240px">工程部</div>
<div class="c a" style="left:1146px;width:150px">任晓渠</div>
<div class="c " style="left:1296px;width:180px">西北地区</div>
<div class="c " style="left:1476px;width:323px">西安工商银行</div>
<div class="c " style="left:1799px;width:180px">徐文静</div>
</div>
<div class="row" style="top:444px">
<div class="c" style="left:0;width:54px"><i class="cb" style="left:17px;top:17px"></i></div>
<div class="c n" style="left:54px;width:72px">9</div>
<div class="c l n" style="left:126px;width:120px">599</div>
<div class="c a n" style="left:246px;width:180px">009</div>
<div class="c l a" style="left:426px;width:300px">成都笃信物资贸易有限公司</div>
<div class="c " style="left:726px;width:180px">材料供应商</div>
<div class="c " style="left:906px;width:240px">工程部</div>
<div class="c a" style="left:1146px;width:150px">任晓渠</div>
<div class="c " style="left:1296px;width:180px">四川省</div>
<div class="c " style="left:1476px;width:323px">中国工商银行水碾河支行</div>
<div class="c " style="left:1799px;width:180px">徐文杰</div>
</div>
<div class="row alt" style="top:499.5px">
<div class="c" style="left:0;width:54px"><i class="cb" style="left:17px;top:17px"></i></div>
<div class="c n" style="left:54px;width:72px">10</div>
<div class="c l n" style="left:126px;width:120px">600</div>
<div class="c a n" style="left:246px;width:180px">010</div>
<div class="c l a" style="left:426px;width:300px">新疆万城建材贸易有限公司</div>
<div class="c " style="left:726px;width:180px">材料供应商</div>
<div class="c " style="left:906px;width:240px">工程部</div>
<div class="c a" style="left:1146px;width:150px">任晓渠</div>
<div class="c " style="left:1296px;width:180px">西北地区</div>
<div class="c " style="left:1476px;width:323px">建设银行新疆乌鲁木齐支行</div>
<div class="c " style="left:1799px;width:180px">刘婷</div>
</div>
<div class="row" style="top:555px">
<div class="c" style="left:0;width:54px"><i class="cb" style="left:17px;top:17px"></i></div>
<div class="c n" style="left:54px;width:72px">11</div>
<div class="c l n" style="left:126px;width:120px">601</div>
<div class="c a n" style="left:246px;width:180px">011</div>
<div class="c l a" style="left:426px;width:300px">刘永好劳务班组</div>
<div class="c " style="left:726px;width:180px">劳务类</div>
<div class="c " style="left:906px;width:240px">工程管理部</div>
<div class="c a" style="left:1146px;width:150px">胡建</div>
<div class="c " style="left:1296px;width:180px">重庆市</div>
<div class="c t" style="left:1476px;width:323px">中国民生银行股份有限公司朝…</div>
<div class="c " style="left:1799px;width:180px">李希</div>
</div>
<div class="row alt" style="top:610.5px">
<div class="c" style="left:0;width:54px"><i class="cb" style="left:17px;top:17px"></i></div>
<div class="c n" style="left:54px;width:72px">12</div>
<div class="c l n" style="left:126px;width:120px">602</div>
<div class="c a n" style="left:246px;width:180px">012</div>
<div class="c l a" style="left:426px;width:300px">四川华达机械租赁设备有限…</div>
<div class="c " style="left:726px;width:180px">机械类</div>
<div class="c " style="left:906px;width:240px">工程部</div>
<div class="c a" style="left:1146px;width:150px">胡建</div>
<div class="c " style="left:1296px;width:180px">四川省</div>
<div class="c " style="left:1476px;width:323px">中国工商银行建设路支行</div>
<div class="c " style="left:1799px;width:180px">方华</div>
</div>
<div class="row" style="top:666px">
<div class="c" style="left:0;width:54px"><i class="cb" style="left:17px;top:17px"></i></div>
<div class="c n" style="left:54px;width:72px">13</div>
<div class="c l n" style="left:126px;width:120px">603</div>
<div class="c a n" style="left:246px;width:180px">013</div>
<div class="c l a" style="left:426px;width:300px">南京天脉办公用品有限公司</div>
<div class="c " style="left:726px;width:180px">供应商</div>
<div class="c " style="left:906px;width:240px">工程管理部</div>
<div class="c a" style="left:1146px;width:150px">胡建</div>
<div class="c " style="left:1296px;width:180px">江苏省</div>
<div class="c " style="left:1476px;width:323px">中国农业银行南京桂城街支行</div>
<div class="c " style="left:1799px;width:180px">王海</div>
</div>
<div class="row alt" style="top:721.5px">
<div class="c" style="left:0;width:54px"><i class="cb" style="left:17px;top:17px"></i></div>
<div class="c n" style="left:54px;width:72px">14</div>
<div class="c l n" style="left:126px;width:120px">604</div>
<div class="c a n" style="left:246px;width:180px">014</div>
<div class="c l a" style="left:426px;width:300px">武汉科立</div>
<div class="c " style="left:726px;width:180px">客户</div>
<div class="c " style="left:906px;width:240px">工程管理部</div>
<div class="c a" style="left:1146px;width:150px">章燕</div>
<div class="c " style="left:1296px;width:180px">广东省</div>
<div class="c " style="left:1476px;width:323px">中国银行</div>
<div class="c " style="left:1799px;width:180px">王楠</div>
</div>
<div class="row" style="top:777px">
<div class="c" style="left:0;width:54px"><i class="cb" style="left:17px;top:17px"></i></div>
<div class="c n" style="left:54px;width:72px">15</div>
<div class="c l n" style="left:126px;width:120px">605</div>
<div class="c a n" style="left:246px;width:180px">015</div>
<div class="c l a" style="left:426px;width:300px">广州丰泽建材有限公司</div>
<div class="c " style="left:726px;width:180px">材料类</div>
<div class="c " style="left:906px;width:240px">工程部</div>
<div class="c a" style="left:1146px;width:150px">任晓渠</div>
<div class="c " style="left:1296px;width:180px">四川省</div>
<div class="c " style="left:1476px;width:323px">农商银行</div>
<div class="c " style="left:1799px;width:180px">刘文才</div>
</div>
</div>
<div class="abs" style="left:1917px;top:56px;width:17px;height:828px;background:#f1f1f1"><i class="abs" style="left:4px;top:6px;border-bottom:5px solid #a3a3a3;border-left:4.5px solid transparent;border-right:4.5px solid transparent"></i><i class="abs" style="left:2.5px;top:17px;width:12.5px;height:237px;background:#c1c1c1"></i><i class="abs" style="left:4px;top:817px;border-top:5px solid #505050;border-left:4.5px solid transparent;border-right:4.5px solid transparent"></i></div>
<div class="abs" style="left:0;top:884px;width:1934px;height:17px;background:#f1f1f1"><i class="abs" style="left:6px;top:4px;border-right:5px solid #a3a3a3;border-top:4.5px solid transparent;border-bottom:4.5px solid transparent"></i><i class="abs" style="left:17px;top:2px;width:1065px;height:13px;background:#c1c1c1"></i><i class="abs" style="left:1906px;top:4px;border-left:5px solid #505050;border-top:4.5px solid transparent;border-bottom:4.5px solid transparent"></i></div>
<div id="pager">
<svg class="abs" style="left:18px;top:18px" width="22" height="24" viewBox="0 0 22 24"><path d="M9.5,2.5 L2.5,11 L9.5,19.5 M17.5,2.5 L10.5,11 L17.5,19.5" fill="none" stroke="#8fbdea" stroke-width="1.8"/></svg>
<svg class="abs" style="left:72px;top:18px" width="14" height="24" viewBox="0 0 14 24"><path d="M9.5,2.5 L2.5,11 L9.5,19.5" fill="none" stroke="#8fbdea" stroke-width="1.8"/></svg>
<i class="sep" style="left:110px"></i>
<span class="t" style="left:123px">第</span>
<div class="abs" style="left:155px;top:8px;width:48px;height:42px;border:1px solid #a9cdee;border-radius:7px;text-align:center;line-height:40px">1</div>
<span class="t" style="left:215px">页，共 6 页</span>
<i class="sep" style="left:326px"></i>
<svg class="abs" style="left:352px;top:18px" width="14" height="24" viewBox="0 0 14 24"><path d="M3.5,2.5 L10.5,11 L3.5,19.5" fill="none" stroke="#2f86dd" stroke-width="1.8"/></svg>
<svg class="abs" style="left:400px;top:18px" width="22" height="24" viewBox="0 0 22 24"><path d="M3.5,2.5 L10.5,11 L3.5,19.5 M11.5,2.5 L18.5,11 L11.5,19.5" fill="none" stroke="#2f86dd" stroke-width="1.8"/></svg>
<i class="sep" style="left:442px"></i>
<span class="t" style="left:471px">每页<span class="cl">:</span></span>
<div class="abs" style="left:538px;top:8px;width:82px;height:42px;border:1px solid #a9cdee;border-radius:7px;line-height:40px;padding-left:11px">50<i class="abs" style="left:56.5px;top:16px;border-top:8.5px solid #3d8edb;border-left:7px solid transparent;border-right:7px solid transparent"></i></div>
<i class="sep" style="left:632px"></i>
<span class="t" style="right:9px">显示 1 - 50 条，共 293 条</span>
</div>
</div>
<div class="redbox" style="left:332px;top:334px;width:206px;height:874px"></div>
<div class="redbox" style="left:1049px;top:391px;width:298px;height:828px"></div>
<div class="abs" style="left:2466px;top:1159px;width:62px;height:62px;border-radius:50%;background:#0ea6f6;box-shadow:0 6px 12px rgba(0,0,0,.3)">
<svg class="abs" style="left:11px;top:12px" width="42" height="40" viewBox="0 0 42 40"><path d="M5,2.5 H36 A3.5,3.5 0 0 1 39.5,6 V25 A3.5,3.5 0 0 1 36,28.5 H22 L12.5,36 V28.5 H5 A3.5,3.5 0 0 1 1.5,25 V6 A3.5,3.5 0 0 1 5,2.5 Z" fill="none" stroke="#fff" stroke-width="2.3" stroke-linejoin="round"/><g fill="#fff"><rect x="9.5" y="13" width="6" height="5" rx="1"/><rect x="18" y="13" width="6" height="5" rx="1"/><rect x="26.5" y="13" width="6" height="5" rx="1"/></g></svg></div>
<div class="abs" style="left:2487px;top:1149px;width:42px;height:20px;border-radius:10px;background:#fb0d12;color:#fff;font-size:19.5px;line-height:20px;text-align:center;font-style:italic">726</div>
<div class="abs" style="left:2549px;top:1203px;width:12px;height:58px;border-radius:3px;background:#4b5361;border:1px solid #5c6472"><i class="abs" style="left:3px;top:6px;width:5px;height:46px;background:repeating-linear-gradient(180deg,rgba(75,83,97,0) 0,rgba(75,83,97,0) 1px,#4b5361 1px,#4b5361 2px),linear-gradient(180deg,#2b2f37 0,#2b2f37 24%,#e8a030 25%,#e8c440 42%,#b4d254 58%,#5ed28c 80%,#46e2d2 100%)"></i></div>
</body>
</html>
